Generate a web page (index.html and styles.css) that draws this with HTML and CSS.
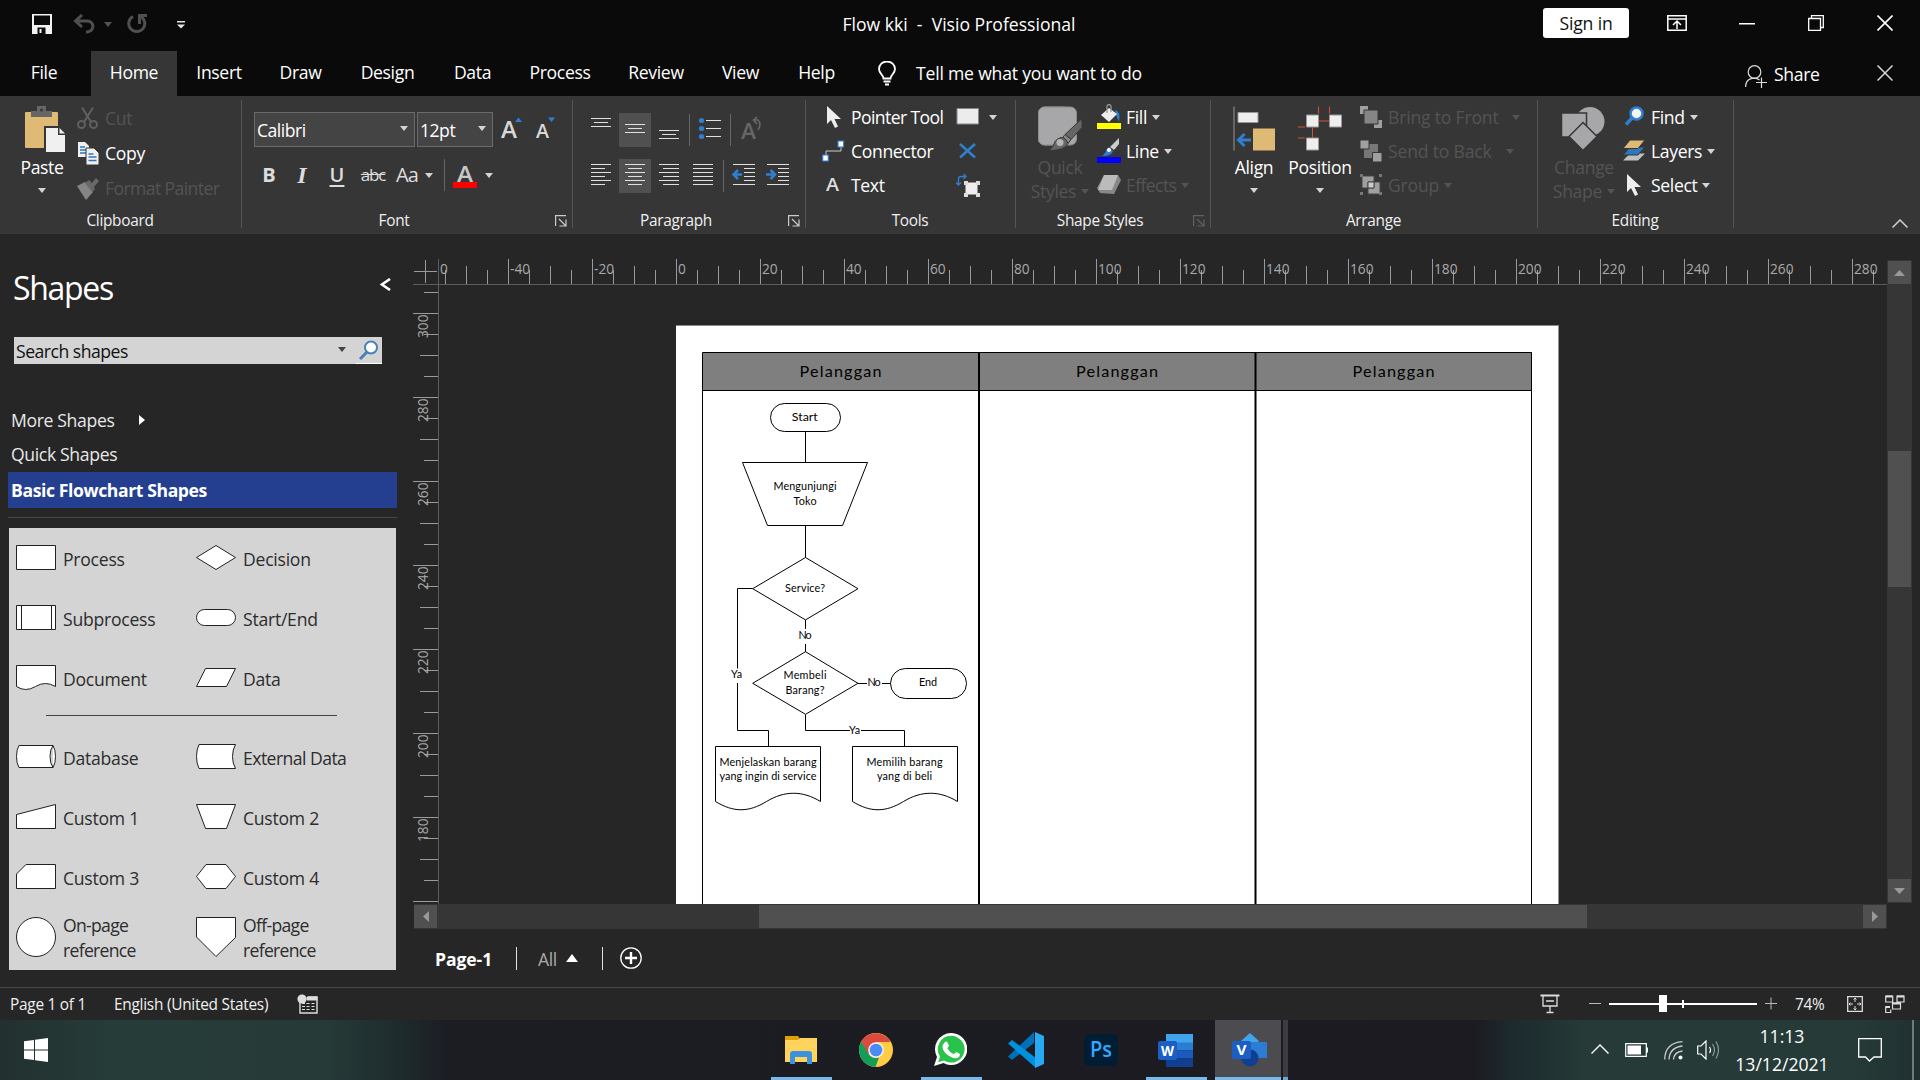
FILE: index.html
```html
<!DOCTYPE html>
<html lang="en">
<head>
<meta charset="utf-8">
<title>Flow kki - Visio Professional</title>
<link rel="stylesheet" href="styles.css">
</head>
<body>
<header class="titlebar">
  <div class="quick">
    <svg width="20" height="20" viewBox="0 0 20 20"><path d="M0 0h20v20H0z" fill="#f2f2f2"/><path d="M2 1.500h16v9.500H2zM5.500 13.500h8V20h-8z" fill="#0a0a0a"/><path d="M7.500 15h2v4h-2z" fill="#f2f2f2"/></svg>
    <svg class="undo" width="22" height="20" viewBox="0 0 22 20" fill="none" stroke="#505050" stroke-width="3"><path d="M9 1 2.500 7 9 13M3 7h11c8 0 8 11-1 11"/></svg>
    <i class="arr dim"></i>
    <svg class="redo" width="20" height="20" viewBox="0 0 20 20" fill="none" stroke="#505050" stroke-width="3"><path d="M6 2.500a8 8 0 1 0 7.500 0M12.500 10V1.500H20"/></svg>
    <svg class="custom" width="8" height="8" viewBox="0 0 8 8" fill="#e6e6e6"><path d="M0 0h8v1.500H0zM0 3.500h8l-4 4z"/></svg>
  </div>
  <div class="doc-title">Flow kki&nbsp; -&nbsp; Visio Professional</div>
  <div class="window-tools">
    <button class="signin">Sign in</button>
    <svg class="w1" width="20" height="16" viewBox="0 0 20 16" fill="none" stroke="#fff" stroke-width="1.500"><path d="M.8.8h18.400v14.400H.8zM1 4h18M10 14V6.500M6 10l4-4 4 4"/></svg>
    <svg class="w2" width="16" height="16" viewBox="0 0 16 16"><path d="M0 8h16v1.500H0z" fill="#fff"/></svg>
    <svg class="w3" width="16" height="16" viewBox="0 0 16 16" fill="none" stroke="#fff" stroke-width="1.300"><path d="M.7 3.500h11.800v11.800H.7zM3.500 3V.7h11.800v11.800h-2.500"/></svg>
    <svg class="w4" width="16" height="16" viewBox="0 0 16 16" stroke="#fff" stroke-width="1.600"><path d="m.5.5 15 15m0-15-15 15"/></svg>
  </div>
</header>
<nav class="tabs">
  <a class="t-file">File</a><a class="t-home on">Home</a><a class="t-insert">Insert</a><a class="t-draw">Draw</a><a class="t-design">Design</a><a class="t-data">Data</a><a class="t-process">Process</a><a class="t-review">Review</a><a class="t-view">View</a><a class="t-help">Help</a>
  <svg class="bulb" width="18" height="25" viewBox="0 0 18 25" fill="none" stroke="#fff" stroke-width="1.800"><path d="M5.500 17.500C5.500 13.500 1 13 1 8a8 7.500 0 0 1 16 0c0 5-4.500 5.500-4.500 9.500zM5.500 20.500h7M7 23.500h4"/></svg>
  <span class="tell">Tell me what you want to do</span>
  <svg class="person" width="22" height="24" viewBox="0 0 22 24" fill="none" stroke="#ddd" stroke-width="1.200"><circle cx="9.500" cy="7" r="6.300"/><path d="M.6 22c0-10 10-10 14-7M16.500 12.500V23M11 17.500h11"/></svg>
  <span class="share">Share</span>
  <svg class="closedoc" width="16" height="16" viewBox="0 0 16 16" stroke="#d8d8d8" stroke-width="1.500"><path d="m.5.5 15 15m0-15-15 15"/></svg>
</nav>
<section class="ribbon">
  <div class="group g-clip">
    <div class="body">
      <div class="big paste">
        <svg width="41" height="46" viewBox="0 0 41 46"><path d="M2 6h30q1 0 1 1v34q0 1-1 1H1q-1 0-1-1V7q0-1 1-1z" fill="#dfba75"/><path d="M6 11V5h6V0h9v5h6v6z" fill="#666"/><circle cx="16.500" cy="4" r="1.500" fill="#363636"/><path d="M19 20h16l7 7v20H19z" fill="#363636"/><path d="M21 22h12v7h7v17H21z" fill="#f0f0f0"/><path d="m34.500 22 5.500 5.500h-5.500z" fill="#f0f0f0"/></svg>
        <span>Paste</span><i class="arr"></i>
      </div>
      <div class="stack clip-stack">
        <div class="row dim"><svg width="24" height="24" viewBox="0 0 24 24" fill="none" stroke="#606060" stroke-width="2"><path d="M6 1.500 15 16M17 1.500 8 16"/><circle cx="5.500" cy="18.500" r="3.500"/><circle cx="17.500" cy="18.500" r="3.500"/></svg><span>Cut</span></div>
        <div class="row"><svg width="24" height="24" viewBox="0 0 24 24"><path d="M2 1h7l4 4v11H2z" fill="#f0f0f0"/><path d="M4 6h5M4 9h6M4 12h6" stroke="#2f76bb" stroke-width="1.400"/><path d="M10 7h8l5 5v12H10z" fill="#f0f0f0" stroke="#363636"/><path d="M12.500 13h5M12.500 16h8M12.500 19.500h8" stroke="#2f76bb" stroke-width="1.400"/></svg><span>Copy</span></div>
        <div class="row dim"><svg width="24" height="24" viewBox="0 0 24 24"><path d="m1 10 8-4 8 10-7 8z" fill="#858585"/><path d="m9 7 4-3 3 3 4-5 3 3-5 6 1 2-3 3z" fill="#696969"/></svg><span class="tight">Format Painter</span></div>
      </div>
    </div>
    <div class="label"><span>Clipboard</span></div>
  </div>
  <div class="group g-font">
    <div class="body font-body">
      <div class="font-row one">
        <div class="combo fam"><span>Calibri</span><i class="arr"></i></div>
        <div class="combo size"><span>12pt</span><i class="arr"></i></div>
        <svg class="grow" width="22" height="32" viewBox="0 -3 22 32"><text x="0" y="23" font-size="22.500" font-weight="600" textLength="16" lengthAdjust="spacingAndGlyphs" fill="#d8d8d8">A</text><path d="M14 7h7l-3.500-4.500z" fill="#2f7fd0"/></svg>
        <svg class="shrink" width="22" height="32" viewBox="0 -3 22 32"><text x="1" y="23" font-size="19" font-weight="600" textLength="13" lengthAdjust="spacingAndGlyphs" fill="#d8d8d8">A</text><path d="M13 2.500h7L16.500 7z" fill="#2f7fd0"/></svg>
      </div>
      <div class="font-row two">
        <b class="f-b">B</b><em class="f-i">I</em><u class="f-u">U</u><s class="f-s">abc</s><span class="f-aa">Aa</span><i class="arr"></i><i class="vsep"></i>
        <svg class="f-color" width="24" height="34" viewBox="0 -6 24 34"><text x="4" y="18" font-size="22" font-weight="600" textLength="16" lengthAdjust="spacingAndGlyphs" fill="#c8c8c8">A</text><path d="M0 18h24v6H0z" fill="red"/></svg><i class="arr a2"></i>
      </div>
    </div>
    <div class="label"><span>Font</span><svg class="launch" width="12" height="12" viewBox="0 0 12 12" fill="none" stroke="#ccc" stroke-width="1.200"><path d="M.6 11V.6H11M4 4l7 7M11 4.500V11H4.500"/></svg></div>
  </div>
  <div class="group g-para">
    <div class="body para-body">
      <div class="para-row r1">
        <div class="cell"><svg width="20" height="34" viewBox="0 0 20 34" stroke="#e0e0e0"><path d="M0 5.500h20M3 9.500h14M0 13.500h20"/></svg></div>
        <div class="cell on"><svg width="20" height="34" viewBox="0 0 20 34" stroke="#e0e0e0"><path d="M0 11.500h20M3 15.500h14M0 19.500h20"/></svg></div>
        <div class="cell"><svg width="20" height="34" viewBox="0 0 20 34" stroke="#e0e0e0"><path d="M0 17.500h20M3 21.500h14M0 25.500h20"/></svg></div>
        <i class="vsep"></i>
        <div class="cell bullets"><svg width="22" height="34" viewBox="0 0 22 34" stroke="#e0e0e0"><path d="M7 7.500h15M7 15.500h15M7 23.500h15"/><g fill="#2f7fd0" stroke="none"><circle cx="2.500" cy="7.500" r="2.600"/><circle cx="2.500" cy="15.500" r="2.600"/><circle cx="2.500" cy="23.500" r="2.600"/></g></svg></div>
        <i class="vsep"></i>
        <div class="cell rot"><svg width="22" height="34" viewBox="0 0 22 34"><text x="1" y="26" font-size="22" font-weight="600" textLength="15" lengthAdjust="spacingAndGlyphs" fill="#666">A</text><path d="M14 7h4q4 4 0 10M17 4l-3.500 3 3.500 4" fill="none" stroke="#666" stroke-width="1.700"/></svg></div>
      </div>
      <div class="para-row r2">
        <div class="cell"><svg width="20" height="34" viewBox="0 0 20 34" stroke="#e0e0e0"><path d="M0 5.500h20M0 9.500h14M0 13.500h20M0 17.500h14M0 21.500h20M0 25.500h14"/></svg></div>
        <div class="cell on"><svg width="20" height="34" viewBox="0 0 20 34" stroke="#e0e0e0"><path d="M0 5.500h20M3 9.500h14M0 13.500h20M3 17.500h14M0 21.500h20M3 25.500h14"/></svg></div>
        <div class="cell"><svg width="20" height="34" viewBox="0 0 20 34" stroke="#e0e0e0"><path d="M0 5.500h20M4 9.500h16M0 13.500h20M4 17.500h16M0 21.500h20M4 25.500h16"/></svg></div>
        <div class="cell"><svg width="20" height="34" viewBox="0 0 20 34" stroke="#e0e0e0"><path d="M0 5.500h20M0 9.500h20M0 13.500h20M0 17.500h20M0 21.500h20M0 25.500h20"/></svg></div>
        <i class="vsep"></i>
        <div class="cell"><svg width="23" height="34" viewBox="0 0 23 34" stroke="#e0e0e0"><path d="M1 5.500h22M12 9.500h11M12 13.500h11M12 17.500h11M12 21.500h11M1 25.500h22"/><path d="M10 15.500H2M6 11l-4.500 4.500L6 20" fill="none" stroke="#2f7fd0" stroke-width="2.600"/></svg></div>
        <div class="cell"><svg width="23" height="34" viewBox="0 0 23 34" stroke="#e0e0e0"><path d="M1 5.500h22M12 9.500h11M12 13.500h11M12 17.500h11M12 21.500h11M1 25.500h22"/><path d="M0 15.500h8M4.500 11 9 15.500 4.500 20" fill="none" stroke="#2f7fd0" stroke-width="2.600"/></svg></div>
      </div>
    </div>
    <div class="label"><span>Paragraph</span><svg class="launch" width="12" height="12" viewBox="0 0 12 12" fill="none" stroke="#ccc" stroke-width="1.200"><path d="M.6 11V.6H11M4 4l7 7M11 4.500V11H4.500"/></svg></div>
  </div>
  <div class="group g-tools">
    <div class="body">
      <div class="stack tools-a">
        <div class="row"><svg width="24" height="24" viewBox="0 0 24 24"><path d="M5 1v18l4-4 4 8 3-1.500L12.500 14H19z" fill="#eee"/></svg><span class="tight">Pointer Tool</span></div>
        <div class="row"><svg width="24" height="24" viewBox="0 0 24 24"><path d="M4 19v-7h15V5" fill="none" stroke="#ccc"/><path d="M.7 16h5.600v6H.7zM16 2h5.600v6H16z" fill="#fff" stroke="#2f7fd0" stroke-width="1.200"/></svg><span>Connector</span></div>
        <div class="row"><svg width="24" height="28" viewBox="0 -2 24 28"><text x="4" y="18" font-size="18.500" font-weight="600" textLength="13" lengthAdjust="spacingAndGlyphs" fill="#ddd">A</text></svg><span>Text</span></div>
      </div>
      <div class="stack tools-b">
        <div class="row"><svg width="24" height="24" viewBox="0 0 24 24"><path d="M1 3.500h21.500v15.500H1z" fill="#ececec" stroke="#888"/></svg><i class="arr"></i></div>
        <div class="row"><svg width="24" height="24" viewBox="0 0 24 24"><path d="m4 5 15 13.500M19 5 4 18.500" stroke="#2f7fd0" stroke-width="2.600"/></svg></div>
        <div class="row"><svg width="24" height="24" viewBox="0 0 24 24"><path d="M9.500 9.500h12v12h-12z" fill="#eee"/><path d="M8 8h4v4H8zM20 8h4v4h-4zM8 20h4v4H8zM20 20h4v4h-4z" fill="#ddd"/><path d="M2.500 12V5.500q0-2 3-2H10M7.500 1 10 3.500 7.500 6M0 9.500 2.500 12 5 9.500" fill="none" stroke="#2f7fd0" stroke-width="1.300"/></svg></div>
      </div>
    </div>
    <div class="label"><span>Tools</span></div>
  </div>
  <div class="group g-styles">
    <div class="body">
      <div class="big quickst dim">
        <svg width="45" height="45" viewBox="0 0 45 45"><rect x=".5" y=".5" width="31" height="38" rx="6" fill="#a7a7a9" stroke="#8c8c8e"/><rect x=".5" y=".5" width="38" height="38" rx="6" fill="#a7a7a9" stroke="#8c8c8e"/><path d="M44 12v9L33 33l-6-5z" fill="#666" stroke="#363636"/><path d="m27 28 6 5-3 4-6-5z" fill="#8a8a8a" stroke="#363636"/><path d="M23 31q5 0 7 6-3 7-19 7 5-4 6-9 2-3 6-4z" fill="#666" stroke="#363636"/><circle cx="22" cy="36" r="3.500" fill="#b5b5b5"/></svg>
        <span>Quick</span><span>Styles <i class="arr"></i></span>
      </div>
      <div class="stack">
        <div class="row"><svg width="25" height="26" viewBox="0 0 25 26"><path d="M18 6q6 1 4 12l-3-7z" fill="#2f7fd0"/><path d="m4 11 8-7 8 6-8 8z" fill="#eee"/><path d="M10 9V2q2-3 4 0v6" fill="none" stroke="#999" stroke-width="1.300"/><path d="M0 19h24v6H0z" fill="#ff0"/></svg><span>Fill</span><i class="arr"></i></div>
        <div class="row"><svg width="25" height="26" viewBox="0 0 25 26"><path d="M22 0v6l-5 6-4-3z" fill="#ccc"/><path d="m12 9 4 4q-1 5-11 5 4-3 4-6z" fill="#2f7fd0"/><circle cx="12" cy="12" r="2" fill="#fff"/><path d="M0 19h24v6H0z" fill="#00f"/></svg><span>Line</span><i class="arr"></i></div>
        <div class="row dim"><svg width="25" height="26" viewBox="0 0 25 26"><path d="m7 3 14 0 3 5-7 14-14-1-3-5z" fill="#888"/><path d="M7 3h14l-6 15H1z" fill="#bbb"/></svg><span class="tight">Effects</span><i class="arr"></i></div>
      </div>
    </div>
    <div class="label"><span>Shape Styles</span><svg class="launch" width="12" height="12" viewBox="0 0 12 12" fill="none" stroke="#606060" stroke-width="1.200"><path d="M.6 11V.6H11M4 4l7 7M11 4.500V11H4.500"/></svg></div>
  </div>
  <div class="group g-arr">
    <div class="body">
      <div class="big align">
        <svg width="42" height="45" viewBox="0 0 42 45"><path d="M0 0h2v44H0z" fill="#666"/><path d="M5 6h20v10H5z" fill="#eee" stroke="#999"/><path d="M20 22h22v22H20z" fill="#dfba75"/><path d="M18 33.500H6M11.500 27.500l-6 6 6 6" fill="none" stroke="#2f7fd0" stroke-width="3"/></svg>
        <span>Align</span><i class="arr"></i>
      </div>
      <div class="big position">
        <svg width="45" height="45" viewBox="0 0 45 45"><path d="M20.500 0v7M31.500 0v7M21 14.500h10M0 20.500h7M0 31.500h7M14.500 21v10" stroke="#d8502c"/><path d="M8.500 8.500h12v12h-12zM31.500 8.500h12v12h-12zM8.500 31.500h12v12h-12z" fill="#eee" stroke="#999"/></svg>
        <span>Position</span><i class="arr"></i>
      </div>
      <div class="stack dim">
        <div class="row"><svg width="24" height="24" viewBox="0 0 24 24"><path d="M1 1h8v8H1zM15 15h8v8h-8z" fill="#a0a0a0"/><path d="M5 5h14v14H5z" fill="#858585" stroke="#363636"/></svg><span>Bring to Front</span><i class="arr far"></i></div>
        <div class="row"><svg width="24" height="24" viewBox="0 0 24 24"><path d="M5 5h14v14H5z" fill="#777"/><path d="M1 1h9v9H1zM13.500 13.500H23V23h-9.500z" fill="#a0a0a0" stroke="#363636"/></svg><span>Send to Back</span><i class="arr far"></i></div>
        <div class="row"><svg width="24" height="24" viewBox="0 0 24 24"><path d="M3 3h12v12H3zM9 9h12v12H9z" fill="#a0a0a0" stroke="#444"/><path d="M9 9h6v6H9z" fill="#ccc" stroke="#444"/><path d="M1 1h3v3H1zM20 1h3v3h-3zM1 19h3v3H1zM20 19h3v3h-3z" fill="#777"/></svg><span>Group</span><i class="arr"></i></div>
      </div>
    </div>
    <div class="label"><span>Arrange</span></div>
  </div>
  <div class="group g-edit">
    <div class="body">
      <div class="big change dim">
        <svg width="44" height="45" viewBox="0 0 44 45"><circle cx="29" cy="15" r="14.500" fill="#a7a7a9"/><path d="M.5 6.500h25v24H.5z" fill="#a7a7a9" stroke="#363636" stroke-width="1.500"/><path d="m22 16 14 14-14 14L8 30z" fill="#a7a7a9" stroke="#363636" stroke-width="1.500"/></svg>
        <span>Change</span><span>Shape <i class="arr"></i></span>
      </div>
      <div class="stack">
        <div class="row"><svg width="24" height="24" viewBox="0 0 24 24"><circle cx="14.500" cy="8.500" r="6" fill="#f4f4f4" stroke="#2f7fd0" stroke-width="2.500"/><path d="m10 13-6 6.500" stroke="#2f7fd0" stroke-width="3.500"/></svg><span>Find</span><i class="arr"></i></div>
        <div class="row"><svg width="24" height="24" viewBox="0 0 24 24"><path d="m8 14.500h15l-7 7H1z" fill="#c0c0c0"/><path d="m8 8h15l-7 8H1z" fill="#2f76bb" stroke="#363636"/><path d="m8 1h15l-7 8.500H1z" fill="#dfba75" stroke="#363636"/></svg><span>Layers</span><i class="arr"></i></div>
        <div class="row"><svg width="24" height="24" viewBox="0 0 24 24"><path d="M5 1v18l4-4 4 8 3-1.500L12.500 14H19z" fill="#eee"/></svg><span>Select</span><i class="arr"></i></div>
      </div>
    </div>
    <div class="label"><span>Editing</span></div>
  </div>
  <svg class="collapse" width="16" height="9" viewBox="0 0 16 9" fill="none" stroke="#d0d0d0" stroke-width="1.500"><path d="m.5 8.500 7.500-7.500 7.500 7.500"/></svg>
</section>
<main class="work">
  <aside class="shapes">
    <div class="pane-head"><h1>Shapes</h1><svg width="11" height="13" viewBox="0 0 11 13" fill="none" stroke="#fff" stroke-width="2.600"><path d="M10 1 2 6.500 10 12"/></svg></div>
    <div class="search"><span>Search shapes</span><i class="arr"></i><div class="mag"><svg width="20" height="20" viewBox="0 0 20 20"><circle cx="12" cy="7.500" r="6" fill="#fff" stroke="#4a7fb8" stroke-width="2"/><path d="m8 12-7 7" stroke="#4a7fb8" stroke-width="3"/></svg></div></div>
    <div class="more"><span>More Shapes</span><i></i></div>
    <div class="qs">Quick Shapes</div>
    <div class="stencil-name">Basic Flowchart Shapes</div>
    <div class="rule"></div>
    <div class="stencil">
      <div class="shape"><svg width="42" height="42" viewBox="0 0 42 42"><path d="M1.500 8.500h39v24h-39z"/></svg><span>Process</span></div>
      <div class="shape"><svg width="42" height="42" viewBox="0 0 42 42"><path d="M21 8.500 40.500 20.500 21 32.500 1.500 20.500z"/></svg><span>Decision</span></div>
      <div class="shape"><svg width="42" height="42" viewBox="0 0 42 42"><path d="M1.500 8.500h39v24h-39zM6.500 8.500v24M36.500 8.500v24"/></svg><span>Subprocess</span></div>
      <div class="shape"><svg width="42" height="42" viewBox="0 0 42 42"><rect x="1.500" y="12.500" width="39" height="16" rx="8"/></svg><span>Start/End</span></div>
      <div class="shape"><svg width="42" height="42" viewBox="0 0 42 42"><path d="M1.500 8.500h39v21q-10-6-20 0t-19 0z"/></svg><span>Document</span></div>
      <div class="shape"><svg width="42" height="42" viewBox="0 0 42 42"><path d="M10.500 11.500h30l-9 18h-30z"/></svg><span>Data</span></div>
      <div class="divider"></div>
      <div class="shape"><svg width="42" height="42" viewBox="0 0 42 42"><path d="M4 9.500h34q2.500 4 2.500 11t-2.500 11H4q-2.500-4-2.500-11T4 9.500zM38 9.500q-3 4-3 11t3 11"/></svg><span>Database</span></div>
      <div class="shape"><svg width="42" height="42" viewBox="0 0 42 42"><path d="M4 8.500h36.500q-3 5-3 12t3 12H4q-2.500-5-2.500-12T4 8.500z"/></svg><span class="ext">External Data</span></div>
      <div class="shape"><svg width="42" height="42" viewBox="0 0 42 42"><path d="m1.500 18.500 39-10v24h-39z"/></svg><span>Custom 1</span></div>
      <div class="shape"><svg width="42" height="42" viewBox="0 0 42 42"><path d="M1.500 8.500h39l-9 24h-21z"/></svg><span>Custom 2</span></div>
      <div class="shape"><svg width="42" height="42" viewBox="0 0 42 42"><path d="M11 8.500h29.500v24h-39V18z"/></svg><span>Custom 3</span></div>
      <div class="shape"><svg width="42" height="42" viewBox="0 0 42 42"><path d="M11 8.500h20l9.500 12-9.500 12H11l-9.500-12z"/></svg><span>Custom 4</span></div>
      <div class="shape last"><svg width="42" height="42" viewBox="0 0 42 42"><circle cx="21" cy="21" r="19.500"/></svg><span>On-page<br>reference</span></div>
      <div class="shape last"><svg width="42" height="42" viewBox="0 0 42 42"><path d="M1.500 1.500h39v20L21 40.500 1.500 21z"/></svg><span>Off-page<br>reference</span></div>
    </div>
  </aside>
  <section class="editor">
    <div class="canvas-row">
      <svg class="canvas" width="1474" height="670" viewBox="413 234 1474 670">
        <defs>
          <pattern id="hticks" x="676" y="259" width="84" height="25" patternUnits="userSpaceOnUse"><path d="M.5 0v25M21.500 11v14M42.500 7v18M63.500 11v14" stroke="#9a9a9a"/></pattern>
          <pattern id="vticks" x="413" y="313" width="25" height="84" patternUnits="userSpaceOnUse"><path d="M0 .5h25M11 21.500h14M7 42.500h18M11 63.500h14" stroke="#9a9a9a"/></pattern>
        </defs>
        <path d="M439 259h1448v25H439z" fill="url(#hticks)"/>
        <path d="M413 286h25v618h-25z" fill="url(#vticks)"/>
        <path d="M414 271.500h23M425.500 260v23" stroke="#9a9a9a"/>
        <path d="M413 284.500h1474M438.500 259v645" stroke="#5c5c5c"/>
        <g class="ruler-text"><text x="440" y="274">0</text><text x="510" y="274">-40</text><text x="594" y="274">-20</text><text x="678" y="274">0</text><text x="762" y="274">20</text><text x="846" y="274">40</text><text x="930" y="274">60</text><text x="1014" y="274">80</text><text x="1098" y="274">100</text><text x="1182" y="274">120</text><text x="1266" y="274">140</text><text x="1350" y="274">160</text><text x="1434" y="274">180</text><text x="1518" y="274">200</text><text x="1602" y="274">220</text><text x="1686" y="274">240</text><text x="1770" y="274">260</text><text x="1854" y="274">280</text></g>
        <g class="ruler-text"><text transform="translate(428 338) rotate(-90)">300</text><text transform="translate(428 422) rotate(-90)">280</text><text transform="translate(428 506) rotate(-90)">260</text><text transform="translate(428 590) rotate(-90)">240</text><text transform="translate(428 674) rotate(-90)">220</text><text transform="translate(428 758) rotate(-90)">200</text><text transform="translate(428 842) rotate(-90)">180</text></g>
        <path d="M676 325h882.500v579H676z" fill="#fff"/>
        <path d="M676 325.500h882.500" stroke="#8a8a8a"/>
        <path d="M703 352h829v39H703z" fill="#7f7f7f"/>
        <path d="M702.500 904V352.500h829V904M702.500 390.500h829" fill="none" stroke="#000"/>
        <path d="M979 352v552M1255.500 352v552" stroke="#000" stroke-width="2"/>
        <g class="lane-text"><text x="840.500" y="376.500" textLength="82">Pelanggan</text><text x="1117" y="376.500" textLength="82">Pelanggan</text><text x="1393.500" y="376.500" textLength="82">Pelanggan</text></g>
        <g fill="none" stroke="#000">
          <rect x="770.500" y="403.500" width="70" height="28" rx="14"/>
          <path d="M805.500 431.500v31M742.500 462.500h125l-25 63h-75zM805.500 525.500v32M805.500 557.500l52.500 31.200-52.500 31.200-52.800-31.200zM805.500 620v9M805.500 644v8M805.500 651.700l52.500 31.600-52.500 31-52.800-31z"/>
          <path d="M752.700 588.500h-15.200v80M737.500 683v47.500h31v16M858 683.500h9M882 683.500h8.500M805.500 714.500v16H850M861 730.500h43.500v16"/>
          <rect x="890.500" y="668.500" width="76" height="30" rx="15"/>
          <path d="M715.500 801.500v-55h105v55c-18-11-36-11-54 0s-33 11-51 0zM852.500 801.500v-55h105v55c-18-11-36-11-54 0s-33 11-51 0z"/>
        </g>
        <g class="node-text">
          <text x="804.800" y="421" textLength="26" lengthAdjust="spacingAndGlyphs">Start</text>
          <text x="805" y="490" textLength="63">Mengunjungi</text><text x="805" y="505" textLength="23">Toko</text>
          <text x="805" y="592" textLength="40">Service?</text>
          <text x="805" y="639" textLength="13">No</text>
          <text x="805" y="679" textLength="43">Membeli</text><text x="805" y="694" textLength="39">Barang?</text>
          <text x="736.500" y="678" textLength="11">Ya</text>
          <text x="874" y="686" textLength="13">No</text>
          <text x="928" y="686" textLength="18">End</text>
          <text x="854.500" y="734" textLength="11">Ya</text>
          <text x="768" y="766" textLength="97">Menjelaskan barang</text><text x="768" y="780" textLength="97">yang ingin di service</text>
          <text x="904.500" y="766" textLength="76">Memilih barang</text><text x="904.500" y="780" textLength="55">yang di beli</text>
        </g>
      </svg>
      <div class="vscroll"><div class="sb"><svg width="11" height="6" viewBox="0 0 11 6"><path d="M0 6h11L5.500 0z"/></svg></div><div class="vthumb"></div><div class="sb"><svg width="11" height="6" viewBox="0 0 11 6"><path d="M0 0h11L5.500 6z"/></svg></div></div>
    </div>
    <div class="hscroll"><div class="sb"><svg width="6" height="11" viewBox="0 0 6 11"><path d="M6 0v11L0 5.500z"/></svg></div><div class="hthumb"></div><div class="sb"><svg width="6" height="11" viewBox="0 0 6 11"><path d="M0 0v11l6-5.500z"/></svg></div></div>
    <div class="pages"><b>Page-1</b><i class="psep"></i><span>All</span><svg class="up" width="12" height="8" viewBox="0 0 12 8"><path d="M0 8h12L6 0z" fill="#fff"/></svg><i class="psep p2"></i><svg class="add" width="22" height="22" viewBox="0 0 22 22" fill="none" stroke="#fff"><circle cx="11" cy="11" r="10.200" stroke-width="1.300"/><path d="M11 5v12M5 11h12" stroke-width="2.400"/></svg></div>
  </section>
</main>
<footer class="status">
  <span class="s-page">Page 1 of 1</span><span class="s-lang">English (United States)</span>
  <svg class="macro" width="21" height="20" viewBox="0 0 21 20"><path d="M3 8v11h17V3h-9" fill="none" stroke="#ddd" stroke-width="1.400"/><path d="M10 3h10v3H10zM5 9.500h3M9.500 9.500h3M14.500 9.500h3M5 12.500h3M9.500 12.500h3M14.500 12.500h3M5 15.500h3M9.500 15.500h3M14.500 15.500h3" fill="#ddd" stroke="#ddd"/><circle cx="5" cy="5" r="4.600" fill="#ddd"/></svg>
  <svg class="present" width="20" height="20" viewBox="0 0 20 20" fill="none" stroke="#ddd" stroke-width="1.300"><path d="M.5 1.500h19" stroke-width="2"/><path d="M3 2v10h14V2M6 7h8M10 12v6M6.500 18.500h7"/></svg>
  <svg class="zoom" width="190" height="20" viewBox="0 0 190 20"><path d="M1 9.500h12M177 9.500h12M183 3.500v12" stroke="#bbb"/><path d="M21 9h148v2H21zM71 1h8v17h-8zM94 6h2v8h-2z" fill="#fff"/></svg>
  <span class="pct">74%</span>
  <svg class="fit" width="16" height="16" viewBox="0 0 16 16" fill="none" stroke="#ddd"><path d="M.7.7h14.600v14.600H.7z" stroke-width="1.300"/><path d="M8 2v4M8 10v4M2 8h4M10 8h4M6.500 3.500 8 2l1.500 1.500M6.500 12.500 8 14l1.500-1.500M3.500 6.500 2 8l1.500 1.500M12.500 6.500 14 8l-1.500 1.500"/></svg>
  <svg class="switch" width="20" height="19" viewBox="0 0 20 19" fill="none" stroke="#ddd" stroke-width="1.200"><path d="M.7 1h7v6h-7zM12 1h7v6h-7zM7.500 8h8v6h-8zM5 11.500H.7v6h5v-3"/><path d="M1 1.500h6.500M12 1.500h7M8 8.500h7M1 12h4" stroke-width="2"/></svg>
</footer>
<footer class="taskbar">
  <svg class="start" width="24" height="24" viewBox="0 0 24 24" fill="#fff"><path d="m0 3.300 10-1.400v9.500H0zM11 1.700 24 0v11.400H11zM0 12.500h10V22L0 20.700zM11 12.500h13V24l-13-1.800z"/></svg>
  <div class="apps">
    <div class="app open"><svg width="32" height="28" viewBox="0 0 32 28"><path d="M0 0h13l2 3v4H0z" fill="#e0a106"/><path d="M0 4h13l2-2h17v24H0z" fill="#ffd35d"/><path d="M5 28V18q0-3 3-3h16q3 0 3 3v10h-5v-7H10v7z" fill="#3c93dd"/></svg></div>
    <div class="app"><svg width="34" height="34" viewBox="0 0 34 34"><circle cx="17" cy="17" r="17" fill="#fc4"/><path d="M2.300 8.500A17 17 0 0 1 31.700 9H17l-8 13z" fill="#db4a3f"/><path d="M2.300 8.500 9.800 21.500q4 5 10.200 3L16.500 34A17 17 0 0 1 2.300 8.500z" fill="#129d58"/><circle cx="17" cy="17" r="7.800" fill="#f1f1f1"/><circle cx="17" cy="17" r="6.300" fill="#4a8bf5"/></svg></div>
    <div class="app open"><svg width="33" height="34" viewBox="0 0 33 34"><path d="M17 0a16 16 0 1 1-7.500 30L0 33l3-9A16.200 16.200 0 0 1 17 0z" fill="#fff"/><path d="M17 2.800a13.400 13.400 0 1 1-7 24.700L4.200 29.200 6 23.500A13.400 13.400 0 0 1 17 2.800z" fill="#29c24b"/><path d="M10.500 9.500q2-2 3 0l1.300 3q.2 1-1.500 2.800 2 4 6.500 6 1.800-2.300 2.800-2l3 1.500q1 .7-.4 3-3 3-8.700 0-7-3.800-8-9-.3-3.300 2-5.300z" fill="#fff"/></svg></div>
    <div class="app"><svg width="36" height="36" viewBox="0 0 36 36"><path d="M0 24.500 26 0v11L4 28z" fill="#0071b8"/><path d="m0 11.500 4-3.500L28 26v10z" fill="#0090dc"/><path d="m27 0 9 4v28l-9 4z" fill="#29a9f2"/></svg></div>
    <div class="app"><svg width="34" height="32" viewBox="0 0 34 32"><rect width="34" height="32" rx="6" fill="#001d34"/><text x="6" y="22.500" font-size="21" font-weight="600" textLength="22" lengthAdjust="spacingAndGlyphs" fill="#31a8ff">Ps</text></svg></div>
    <div class="app open"><svg width="35" height="33" viewBox="0 0 35 33"><path d="M8 0h27v9H8z" fill="#41a5ee"/><path d="M8 8.500h27v8H8z" fill="#2b7cd3"/><path d="M8 16.500h27v8H8z" fill="#185abd"/><path d="M8 24.500h27V33H8z" fill="#103f91"/><rect y="7" width="19" height="19" rx="2" fill="#1b5fc4"/><text x="3" y="21.500" font-size="14" font-weight="700" textLength="13" lengthAdjust="spacingAndGlyphs" fill="#fff">W</text></svg></div>
    <div class="app active open"><svg width="35" height="34" viewBox="0 0 35 34"><path d="m18 0 9 8-9 9-9-9z" fill="#41a5ee"/><path d="M16 9h19v16H16z" fill="#2b7cd3"/><circle cx="18" cy="25" r="8.500" fill="#103f91"/><rect y="8" width="19" height="18" rx="2" fill="#1b5fc4"/><text x="4.500" y="22" font-size="14" font-weight="700" textLength="10" lengthAdjust="spacingAndGlyphs" fill="#fff">V</text></svg></div>
    <div class="app-edge"></div>
  </div>
  <div class="tray">
    <svg class="chev" width="18" height="10" viewBox="0 0 18 10" fill="none" stroke="#fff" stroke-width="1.400"><path d="M.5 9.500 9 1l8.500 8.500"/></svg>
    <svg class="batt" width="23" height="14" viewBox="0 0 23 14"><path d="M.7.7h20.600v12.600H.7zM22.500 4.500v5" fill="none" stroke="#fff" stroke-width="1.200"/><path d="M2.500 2.500h13.500v9H2.500z" fill="#fff"/></svg>
    <svg class="wifi" width="19" height="19" viewBox="0 0 19 19" fill="none" stroke="#ccc" stroke-width="1.300"><path d="M.7 18.500Q1 2 18.500.7M5 18.500Q5.500 6.500 18.500 5M9.500 18.500Q10 11 18.500 10"/><circle cx="16.500" cy="16.500" r="2" fill="#fff" stroke="none"/></svg>
    <svg class="vol" width="23" height="20" viewBox="0 0 23 20" fill="none" stroke="#fff" stroke-width="1.200"><path d="M.7 6H4l5-5v18l-5-5H.7zM12.500 7q2 3 0 6"/><path d="M15.500 4q4 6 0 12M19 1.500q5 8.500 0 17" stroke="#8d9a99"/></svg>
    <div class="clock"><span>11:13</span><span>13/12/2021</span></div>
    <svg class="note" width="24" height="24" viewBox="0 0 24 24" fill="none" stroke="#fff" stroke-width="1.300"><path d="M.7.7h22.600v18.300H16l-4.500 4-4-4H.7z"/></svg>
    <i class="desk"></i>
  </div>
</footer>
</body>
</html>
```
FILE: styles.css
```css
* { box-sizing: border-box; }
body {
  margin: 0; width: 1920px; height: 1080px; overflow: hidden;
  display: flex; flex-direction: column;
  background: #262626; color: #fff;
  font: 17.6px/24px "Open Sans", "Noto Sans", sans-serif;
  letter-spacing: -0.35px;
}
svg { display: block; flex: none; }
svg text { letter-spacing: 0; }
.arr { flex: none; width: 0; height: 0; border: 4.5px solid transparent; border-top: 5px solid #d4d4d4; border-bottom: 0; }
.dim, .dim span { color: #545454; }
.dim .arr, .arr.dim { border-top-color: #545454; }

/* title bar */
.titlebar { height: 51px; flex: none; background: #0a0a0a; display: grid; grid-template-columns: 540px 838px 1fr; align-items: center; }
.quick { display: flex; align-items: center; padding: 0 0 3px 32px; }
.undo { margin-left: 21px; }
.quick .arr { margin-left: 9px; }
.redo { margin-left: 15px; }
.custom { margin: 2px 0 0 30px; }
.doc-title { text-align: center; padding-bottom: 4px; letter-spacing: 0; }
.window-tools { display: flex; align-items: center; padding-left: 165px; padding-bottom: 5px; }
.signin { width: 86px; height: 30px; border: 0; border-radius: 3px; background: #fff; color: #111; font: inherit; letter-spacing: -.15px; line-height: 28px; padding: 0; }
.w1 { margin-left: 38px; }
.w2 { margin-left: 52px; }
.w3 { margin-left: 53px; }
.w4 { margin-left: 53px; }

/* tab strip */
.tabs { height: 45px; flex: none; background: #0a0a0a; display: flex; align-items: center; }
.tabs a { height: 45px; line-height: 43px; text-align: center; }
.tabs .on { background: #363636; }
.t-file { width: 91px; padding-right: 3px; } .t-home { width: 86px; } .t-insert { width: 84px; } .t-draw { width: 79px; }
.t-design { width: 95px; } .t-data { width: 75px; } .t-process { width: 100px; } .t-review { width: 92px; }
.t-view { width: 77px; } .t-help { width: 75px; }
.bulb { margin-left: 24px; }
.tell { margin-left: 20px; width: 829px; padding-bottom: 2px; letter-spacing: -.2px; }
.share { margin-left: 7px; width: 103px; }
.person { margin-top: 6px; }
.closedoc { margin-bottom: 1px; }

/* ribbon */
.ribbon { height: 138px; flex: none; background: #363636; display: flex; }
.group { display: flex; flex-direction: column; border-right: 1px solid transparent; border-image: linear-gradient(transparent 5px, #555 5px, #555 131px, transparent 131px) 1; }
.g-clip { width: 242px; } .g-font { width: 331px; } .g-para { width: 233px; } .g-tools { width: 210px; }
.g-styles { width: 195px; } .g-arr { width: 327px; } .g-edit { width: 196px; }
.body { height: 111px; display: flex; }
.label { height: 27px; display: flex; align-items: center; font-size: 15.4px; letter-spacing: -.3px; color: #f0f0f0; }
.label span { flex: 1; text-align: center; padding-right: 1px; }
.launch { width: 12px; margin: 0 5px 0 8px; }
.big { display: flex; flex-direction: column; align-items: center; line-height: 24px; padding-top: 10px; }
.big svg { margin-bottom: 3px; height: 46px; }
.big > span { height: 24px; line-height: 24px; white-space: nowrap; }
.big > .arr { margin-top: 9px; }
.big span .arr { display: inline-block; margin: 0 0 4px 1px; }
.stack { padding-top: 4px; }
.row { height: 34px; display: flex; align-items: center; white-space: nowrap; }
.row span { margin-left: 5px; }
.row .tight { letter-spacing: -.6px; }
.row .arr { margin-left: 5px; }
.row .far { margin-left: 14px; }
.paste { width: 50px; margin-left: 17px; }
.paste svg { margin-left: 7px; }
.clip-stack { margin-left: 9px; }
.clip-stack .row { height: 35px; }
.collapse { margin: 123px 0 0 158px; }

.font-body { flex-direction: column; padding-left: 12px; }
.font-row { display: flex; }
.one { margin-top: 16px; height: 35px; }
.combo { height: 35px; border: 1px solid #6a6a6a; background: #444; display: flex; align-items: center; justify-content: space-between; padding: 1px 6px 0 2px; letter-spacing: -.5px; }
.combo .arr { margin-bottom: 3px; }
.fam { width: 161px; } .size { width: 76px; margin-left: 2px; }
.grow { margin: 0 0 0 8px; } .shrink { margin: 0 0 0 12px; }
.two { margin-top: 10px; height: 36px; align-items: center; }
.two > b, .two > em, .two > u, .two > s, .two > span { font-size: 20px; line-height: 30px; width: 34px; text-align: center; color: #ddd; flex: none; letter-spacing: 0; }
.two > .f-b { margin-left: -2px; }
.two > .f-i { font-family: "Liberation Serif", serif; font-weight: 700; font-size: 24px; width: 32px; }
.two > .f-u { width: 38px; font-weight: 600; text-underline-offset: 3px; }
.two > .f-s { font-size: 17px; width: 34px; letter-spacing: -1.200px; }
.two > .f-aa { font-size: 20px; width: 34px; letter-spacing: -.8px; }
.two .arr { margin-left: 1px; }
.vsep { width: 1px; height: 32px; background: #666; flex: none; }
.two .vsep { margin: 0 8px 0 11px; }
.two .a2 { margin-left: 8px; }

.para-body { flex-direction: column; padding-left: 11px; }
.para-row { height: 34px; display: flex; align-items: center; }
.r1 { margin-top: 17px; } .r2 { margin-top: 12px; }
.cell { width: 34px; height: 34px; display: flex; justify-content: center; flex: none; }
.cell.on { background: linear-gradient(90deg, transparent 1px, #505050 1px 33px, transparent 33px); }
.r1 .vsep { margin: 0 3px; }
.r2 .vsep { margin: 0 2px 0 3px; }
.tools-a { margin-left: 16px; width: 134px; }
.tools-b .arr { margin-left: 9px; }
.quickst { width: 64px; margin-left: 12px; }
.g-styles .stack { margin-left: 5px; }
.g-styles .row span { margin-left: 4px; }
.align { width: 62px; margin-left: 12px; }
.position { width: 72px; margin-left: -1px; }
.g-arr .stack { margin-left: 3px; }
.g-arr .stack span { letter-spacing: -.2px; }
.change { width: 66px; margin-left: 13px; }
.change svg { margin-right: 2px; }
.g-edit .stack { margin-left: 5px; }

/* shapes pane */
.work { height: 753px; flex: none; display: flex; }
.shapes { width: 413px; display: flex; flex-direction: column; }
.pane-head { height: 103px; display: flex; justify-content: space-between; padding: 29px 22px 0 13px; }
.pane-head svg { margin-top: 15px; }
h1 { margin: 0; font-size: 32px; line-height: 50px; font-weight: 400; letter-spacing: -1.3px; }
.search { margin-left: 14px; width: 368px; height: 27px; background: #d4d4d4; color: #111; display: flex; align-items: center; padding-left: 2px; }
.search span { flex: 1; padding-top: 1px; letter-spacing: -.5px; }
.search .arr { border-top-color: #444; margin-bottom: 2px; }
.mag { width: 26px; height: 27px; margin-left: 10px; border-bottom: 1px solid #fff; padding: 3px 0 0 3px; }
.more { height: 34px; margin: 39px 0 0 11px; display: flex; align-items: center; color: #e8e8e8; }
.more i { margin-left: 25px; border: 5px solid transparent; border-left: 6px solid #fff; border-right: 0; }
.qs { height: 34px; line-height: 34px; padding-left: 11px; color: #e8e8e8; }
.stencil-name { margin-left: 8px; margin-top: 1px; width: 389px; height: 36px; background: #243f8f; font-weight: 700; line-height: 36px; padding-left: 3px; letter-spacing: -.4px; }
.rule { margin: 9px 0 10px 8px; width: 389px; height: 1px; background: #484848; }
.stencil { margin-left: 9px; width: 387px; height: 442px; background: #d4d4d4; padding: 0 0 0 6px; display: grid; grid-template-columns: 180px 180px; grid-template-rows: 60px 60px 60px 19px 60px 60px 60px 60px; align-content: start; color: #2c2c2c; }
.shape { display: flex; align-items: center; }
.shape svg { fill: #fff; stroke: #222; stroke-width: 1; margin-top: -1px; }
.shape span { margin: 1px 0 0 6px; letter-spacing: -.25px; }
.shape .ext { letter-spacing: -.55px; }
.shape.last span { line-height: 25px; margin-top: 2px; letter-spacing: -.7px; }
.shape.last svg { margin: 0; }
.last { height: 58px; margin-top: 1px; }
.divider { grid-column: 1 / 3; width: 291px; height: 1px; margin: 7px 0 0 31px; background: #444; }

/* drawing area */
.canvas-row { display: flex; }
.ruler-text { fill: #aaa; font-size: 13.700px; }
.lane-text { font-family: Lato, sans-serif; font-size: 16.200px; text-anchor: middle; }
.node-text { font-family: Lato, sans-serif; font-size: 10.800px; text-anchor: middle; }
.vscroll { width: 25px; height: 643px; margin-top: 26px; background: #363636; display: flex; flex-direction: column; justify-content: space-between; align-items: center; padding: 1px; }
.sb { width: 23px; height: 23px; background: #505050; display: flex; align-items: center; justify-content: center; fill: #999; }
.vthumb { width: 23px; height: 136px; background: #505050; margin-bottom: 125px; }
.hscroll { width: 1473px; height: 25px; margin-left: 1px; background: #363636; display: flex; justify-content: space-between; align-items: center; padding: 1px 1px 1px 0; }
.hthumb { width: 828px; height: 23px; background: #505050; margin-right: -45px; }
.pages { height: 58px; display: flex; align-items: center; padding-left: 22px; }
.pages b { width: 81px; letter-spacing: -.1px; margin-top: 2px; }
.psep { width: 1px; height: 23px; background: #e0e0e0; }
.pages span { margin: 2px 0 0 21px; color: #aaa; width: 28px; }
.p2 { margin-left: 24px; }
.add { margin-left: 17px; }

/* status bar */
.status { height: 33px; flex: none; border-top: 1px solid #484848; display: flex; align-items: center; font-size: 15.400px; letter-spacing: -.25px; color: #f0f0f0; }
.status span { padding-top: 1px; }
.s-page { margin-left: 10px; width: 104px; }
.s-lang { width: 183px; }
.present { margin-left: 1222px; }
.zoom { margin-left: 28px; }
.pct { margin-left: 17px; width: 52px; }
.switch { margin-left: 22px; }

/* taskbar */
.taskbar { height: 60px; flex: none; display: flex; align-items: center; background: linear-gradient(90deg, #223030 0, #263c38 110px, #263b38 320px, #1e2b2d 400px, #1c1c23 450px, #1c1b22 1475px, #1c2a2d 1510px, #263b38 1590px, #263b38 1850px, #203030 1920px); }
.start { margin-left: 24px; }
.apps { display: flex; gap: 14px; margin-left: 723px; width: 517px; }
.app { width: 61px; height: 60px; display: flex; align-items: center; justify-content: center; flex: none; }
.app svg { margin-right: 2px; }
.open { border-bottom: 3px solid #76b9ed; padding-top: 3px; }
.active { width: 66px; margin-left: -6px; background: #4b4b50; padding-left: 4px; }
.app-edge { width: 5px; height: 60px; margin-left: -12px; background: #3c3c42; border-bottom: 3px solid #6ba6d3; }
.tray { display: flex; align-items: center; margin-left: 303px; }
.chev { margin-top: -2px; }
.batt { margin-left: 16px; }
.wifi { margin-left: 16px; }
.vol { margin-left: 14px; }
.clock { width: 116px; margin-left: 4px; display: flex; flex-direction: column; text-align: center; line-height: 28px; letter-spacing: 0; }
.note { margin-left: 18px; }
.desk { width: 2px; height: 60px; margin-left: 30px; background: #6e7d7b; }
```
